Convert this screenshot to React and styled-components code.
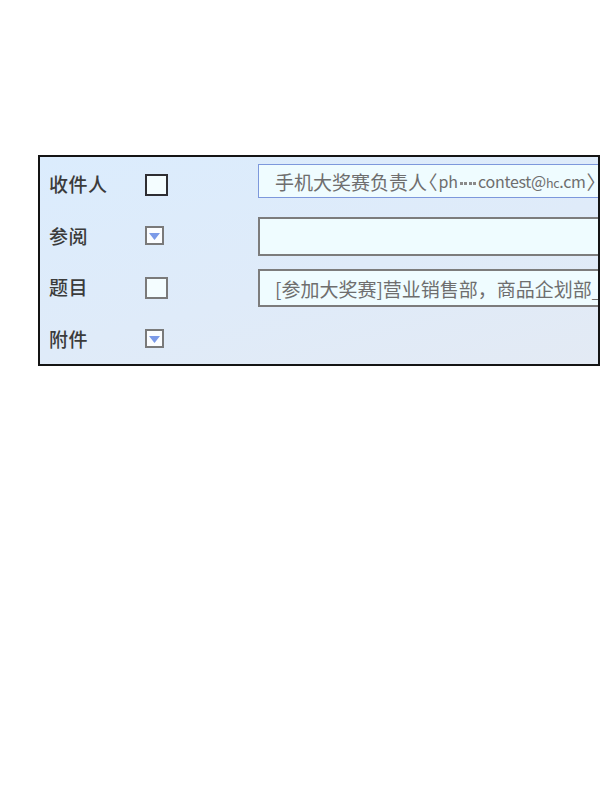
import React from "react";
import styled, { createGlobalStyle } from "styled-components";

const GlobalStyle = createGlobalStyle`
  body {
    margin: 0;
    background: #ffffff;
    font-family: "Noto Sans CJK SC", "Noto Sans", sans-serif;
  }
`;

const Panel = styled.div`
  box-sizing: border-box;
  margin: 155px 0 0 38px;
  width: 562px;
  height: 211px;
  border: 2px solid #141414;
  background: linear-gradient(165deg, #dbecfd 0%, #dfebf9 55%, #e3eaf4 100%);
  overflow: hidden;
  padding-top: 1px;
  display: flex;
  flex-direction: column;
`;

const Row = styled.div`
  display: grid;
  grid-template-columns: 105px 113px 380px;
  align-items: center;
  height: 53px;
`;

const Label = styled.div`
  padding-left: 9px;
  font-size: 19px;
  font-weight: 500;
  color: #3b3b3b;
  letter-spacing: 0.5px;
`;

const Check = styled.div`
  box-sizing: border-box;
  width: 23px;
  height: 22px;
  margin-top: ${(p) => p.$shift || 0}px;
  border: 2px solid ${(p) => (p.$active ? "#2e2e33" : "#7a7a7a")};
  background: #f4fdff;
`;

const Drop = styled.div`
  box-sizing: border-box;
  width: 19px;
  height: 19px;
  border: 2px solid #7a7a7a;
  background: #fbfdff;
  display: flex;
  align-items: center;
  justify-content: center;
  padding-top: 2px;
`;

const Field = styled.div`
  box-sizing: border-box;
  height: ${(p) => p.$h}px;
  margin-top: ${(p) => p.$shift || 0}px;
  border: ${(p) => (p.$focus ? "1px solid #7d98dc" : "2px solid #7c7c7c")};
  border-right: none;
  background: #effcff;
  display: flex;
  align-items: center;
  padding-left: ${(p) => (p.$focus ? 16 : 15)}px;
  font-size: 19px;
  color: #6e6e6e;
  white-space: nowrap;
  overflow: hidden;
`;

const Email = styled.span`
  display: inline-flex;
  align-items: baseline;
  font-size: 16px;
  letter-spacing: -0.3px;
`;

const Small = styled.span`
  font-size: 12.5px;
`;

const Dots = styled.span`
  display: inline-flex;
  gap: 1.5px;
  margin: 0 2px 0 2px;
  align-self: center;
  transform: translateY(2px);

  i {
    width: 3px;
    height: 3px;
    background: #8a8a8a;
  }
`;

const Bracket = styled.span`
  font-feature-settings: "halt";
  margin: 0 1px;
`;

const Arrow = () => (
  <svg width="11" height="7" viewBox="0 0 11 7">
    <path d="M0 0H11L5.5 7Z" fill="#7b9ae8" />
  </svg>
);

export default function App() {
  return (
    <>
      <GlobalStyle />
      <Panel>
        <Row>
          <Label>收件人</Label>
          <Check $active $shift={2} />
          <Field $h={34} $focus $shift={-5}>
            手机大奖赛负责人<Bracket>〈</Bracket>
            <Email>
              ph
              <Dots>
                <i />
                <i />
                <i />
                <i />
              </Dots>
              contest@<Small>hc</Small>.cm
            </Email>
            <Bracket>〉</Bracket>
          </Field>
        </Row>
        <Row>
          <Label>参阅</Label>
          <Drop>
            <Arrow />
          </Drop>
          <Field $h={39} $shift={2} />
        </Row>
        <Row>
          <Label>题目</Label>
          <Check $shift={3} />
          <Field $h={38} $shift={3}>[参加大奖赛]营业销售部，商品企划部_</Field>
        </Row>
        <Row>
          <Label>附件</Label>
          <Drop>
            <Arrow />
          </Drop>
        </Row>
      </Panel>
    </>
  );
}
